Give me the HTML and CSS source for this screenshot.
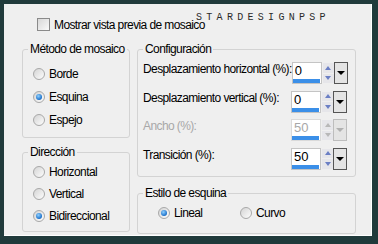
FILE: index.html
```html
<!DOCTYPE html>
<html lang="es">
<head>
  <meta charset="UTF-8">
  <title>Mosaico</title>
  <link rel="stylesheet" href="styles.css">
</head>
<body>
  <div class="panel">
    <div class="watermark">STARDESIGNPSP</div>
    <div class="header">
      <label class="check"><span class="box"></span>Mostrar vista previa de mosaico</label>
    </div>
    <div class="cols">
      <div class="col left">
        <fieldset class="group method">
          <legend>Método de mosaico</legend>
          <div class="radios">
            <div class="radio"><span class="dot"></span>Borde</div>
            <div class="radio"><span class="dot on"></span>Esquina</div>
            <div class="radio"><span class="dot"></span>Espejo</div>
          </div>
        </fieldset>
        <fieldset class="group dir">
          <legend>Dirección</legend>
          <div class="radios tight">
            <div class="radio"><span class="dot"></span>Horizontal</div>
            <div class="radio"><span class="dot"></span>Vertical</div>
            <div class="radio"><span class="dot on"></span>Bidireccional</div>
          </div>
        </fieldset>
      </div>
      <div class="col right">
        <fieldset class="group config">
          <legend>Configuración</legend>
          <div class="rows">
            <div class="row">
              <span class="lbl">Desplazamiento horizontal (%):</span>
              <div class="spin">
                <div class="field"><span class="val">0</span><span class="bar"></span></div>
                <div class="arrows"><span class="up"></span><span class="down"></span></div>
                <div class="drop"><span class="tri"></span></div>
              </div>
            </div>
            <div class="row">
              <span class="lbl">Desplazamiento vertical (%):</span>
              <div class="spin">
                <div class="field"><span class="val">0</span><span class="bar"></span></div>
                <div class="arrows"><span class="up"></span><span class="down"></span></div>
                <div class="drop"><span class="tri"></span></div>
              </div>
            </div>
            <div class="row off">
              <span class="lbl">Ancho (%):</span>
              <div class="spin">
                <div class="field"><span class="val">50</span><span class="bar"></span></div>
                <div class="arrows"><span class="up"></span><span class="down"></span></div>
                <div class="drop"><span class="tri"></span></div>
              </div>
            </div>
            <div class="row">
              <span class="lbl">Transición (%):</span>
              <div class="spin">
                <div class="field"><span class="val">50</span><span class="bar"></span></div>
                <div class="arrows"><span class="up"></span><span class="down"></span></div>
                <div class="drop"><span class="tri"></span></div>
              </div>
            </div>
          </div>
        </fieldset>
        <fieldset class="group corner">
          <legend>Estilo de esquina</legend>
          <div class="inline">
            <div class="radio first"><span class="dot on"></span>Lineal</div>
            <div class="radio"><span class="dot"></span>Curvo</div>
          </div>
        </fieldset>
      </div>
    </div>
  </div>
</body>
</html>
```

FILE: styles.css
```css
* { box-sizing:border-box; }
body { margin:0; background:#203a3b; width:378px; height:244px; overflow:hidden; font-family:'Liberation Sans',Arial,sans-serif; font-size:12px; letter-spacing:-0.6px; color:#000; white-space:nowrap; }
.panel { position:relative; margin:4px 0 0 4px; width:368px; height:232px; background:#efefef; border-right:1px solid #fff; border-bottom:1px solid #fff; padding-left:18px; }
.watermark { position:absolute; left:192px; top:8px; font-family:'Liberation Mono',monospace; font-size:10px; letter-spacing:4.3px; color:#2a2a2a; }
.header { height:38px; display:flex; align-items:center; padding-left:15px; padding-top:3px; }
.check { display:flex; align-items:center; gap:4px; }
.box { width:13px; height:13px; border:1px solid #8a8a8a; background:linear-gradient(135deg,#d8d8d8,#fafafa); }
.cols { display:flex; gap:7px; }
.col { display:flex; flex-direction:column; }
.left { width:108px; gap:7px; }
.right { width:219px; gap:9px; }
.group { margin:0; padding:0; border:1px solid #d3d3d3; border-radius:3px; min-width:0; }
.group legend { padding:0 2px; margin-left:5px; line-height:14px; }
.method { height:96px; }
.dir { height:87px; }
.config { height:135px; }
.corner { height:48px; }
.radios { display:flex; flex-direction:column; padding:6px 0 0 10px; }
.radios .radio { height:23px; }
.radios.tight { padding-top:2px; }
.radios.tight .radio { height:22px; }
.radio { display:flex; align-items:center; gap:4px; }
.dot { width:12px; height:12px; border-radius:50%; border:1px solid #a8a8a8; background:linear-gradient(135deg,#d4d4d4,#fdfdfd); display:flex; align-items:center; justify-content:center; }
.dot.on::after { content:''; width:6px; height:6px; border-radius:50%; background:radial-gradient(circle at 40% 35%,#8fd0ff,#1a6fc9 70%,#0d4f9c); }
.rows { display:flex; flex-direction:column; gap:6.5px; padding:6px 8px 0 5px; }
.row { display:flex; align-items:center; justify-content:space-between; height:22px; }
.lbl { padding-bottom:8px; }
.spin { display:flex; height:22px; width:56px; flex:none; }
.field { width:30px; border:1px solid #c4c4c4; background:#fff; display:flex; flex-direction:column; }
.val { flex:1; padding-left:2px; line-height:16px; font-size:13px; letter-spacing:0; }
.bar { height:4px; width:27px; background:#3b8fe8; }
.arrows { width:11px; margin-left:1px; display:flex; flex-direction:column; gap:1px; padding:1px 0; }
.arrows span { flex:1; display:flex; align-items:center; justify-content:center; background:#e6e6ea; }
.up::after { content:''; border:3px solid transparent; border-bottom:4px solid #6b7fc4; border-top:0; }
.down::after { content:''; border:3px solid transparent; border-top:4px solid #6b7fc4; border-bottom:0; }
.drop { width:14px; border:1px solid #555; background:#e4e4e4; display:flex; align-items:center; justify-content:center; }
.tri { border:4px solid transparent; border-top:4px solid #000; border-bottom:0; }
.off .lbl, .off .val { color:#a8a8a8; }
.off .field { border-color:#dadada; }
.off .up::after { border-bottom-color:#b8b8b8; }
.off .down::after { border-top-color:#b8b8b8; }
.off .drop { border-color:#bdbdbd; }
.off .tri { border-top-color:#b0b0b0; }
.inline { display:flex; padding:2px 0 0 20px; height:24px; align-items:center; }
.inline .first { width:82px; }
```
